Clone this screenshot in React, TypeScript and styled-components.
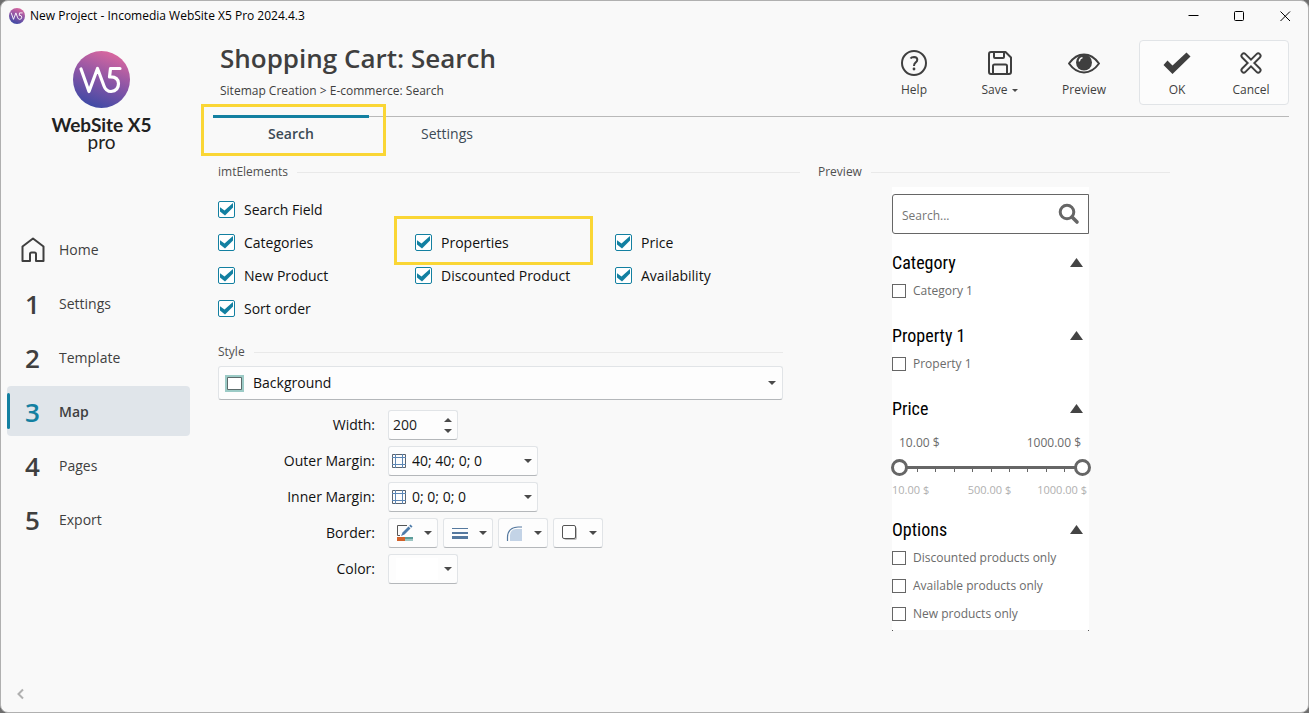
import React, { useState } from "react";
import styled, { createGlobalStyle, css } from "styled-components";

const teal = "#1380a1";
const ink = "#3f3f3f";
const yellow = "#fad635";

const GlobalStyle = createGlobalStyle`
  *, *::before, *::after { box-sizing: border-box; }
  body {
    margin: 0;
    background: #6e6e6e;
    color: #1c1c1c;
    font-family: "Open Sans", "Noto Sans", sans-serif;
    font-size: 14px;
    line-height: 20px;
  }
  button, input, select { font: inherit; color: inherit; margin: 0; }
  button { background: none; border: 0; padding: 0; cursor: pointer; }
  h1, h2, h3, p { margin: 0; font-weight: 400; }
  svg { display: block; flex: none; }
`;

const Window = styled.div`
  display: flex;
  flex-direction: column;
  min-height: 100vh;
  background: #f9f9f9;
  border: 1px solid #b0b0b0;
  border-radius: 8px;
`;

/* ---------- title bar ---------- */

const TitleBar = styled.header`
  display: flex;
  align-items: center;
  height: 30px;
  padding-left: 8px;
  gap: 5px;
  color: #000;
  font-size: 12px;
`;

const WindowButtons = styled.div`
  display: flex;
  margin-left: auto;
`;

const WindowButton = styled.button`
  display: grid;
  place-items: center;
  width: 46px;
  height: 28px;
`;

/* ---------- sidebar ---------- */

const Body = styled.div`
  display: flex;
  flex: 1;
`;

const Sidebar = styled.aside`
  display: flex;
  flex-direction: column;
  width: 189px;
  flex: none;
  padding: 20px 0 12px 6px;
`;

const Brand = styled.div`
  display: flex;
  flex-direction: column;
  align-items: center;
  height: 173px;
  padding-left: 6px;
  color: #222;
  font-family: Lato, sans-serif;
  font-size: 19px;
  line-height: 17px;
`;

const BrandName = styled.span`
  margin-top: 8px;
  font-weight: 700;
  white-space: nowrap;
`;

const BrandEdition = styled.span`
  font-weight: 400;
`;

const Nav = styled.nav`
  display: flex;
  flex-direction: column;
  gap: 4px;
`;

const NavItem = styled.a<{ $active?: boolean }>`
  position: relative;
  display: flex;
  align-items: center;
  height: 50px;
  padding: 2px 0 0 13px;
  border-radius: 4px;
  color: ${ink};
  text-decoration: none;
  ${(p) =>
    p.$active &&
    css`
      background: #e0e5ea;
      font-weight: 600;
      &::before {
        content: "";
        position: absolute;
        left: 0;
        top: 7px;
        bottom: 7px;
        width: 3px;
        border-radius: 2px;
        background: ${teal};
      }
    `}
`;

const NavMark = styled.span<{ $active?: boolean }>`
  display: grid;
  justify-items: center;
  width: 25px;
  margin-right: 14px;
  color: ${(p) => (p.$active ? teal : ink)};
  font-size: 26px;
  font-weight: 600;
`;

const Collapse = styled.button`
  align-self: flex-start;
  margin-top: auto;
  padding-left: 10px;
`;

/* ---------- page header ---------- */

const Main = styled.main`
  flex: 1;
  min-width: 0;
  padding: 9px 19px 20px 23px;
`;

const PageHeader = styled.div`
  display: flex;
  justify-content: space-between;
  height: 76px;
  padding-left: 7px;
`;

const Title = styled.h1`
  margin-top: 2px;
  color: ${ink};
  font-size: 26px;
  font-weight: 600;
  line-height: 32px;
`;

const Breadcrumb = styled.p`
  margin-top: 8px;
  color: ${ink};
  font-size: 12px;
  line-height: 18px;
`;

const Toolbar = styled.div`
  display: flex;
  align-items: flex-start;
`;

const Tool = styled.button<{ $width: number }>`
  display: flex;
  flex-direction: column;
  align-items: center;
  width: ${(p) => p.$width}px;
  padding-top: 9px;
  gap: 4px;
  color: ${ink};
  font-size: 12px;
  line-height: 18px;
`;

const ToolLabel = styled.span`
  display: flex;
  align-items: center;
  gap: 5px;
`;

const Confirm = styled.div`
  display: flex;
  height: 65px;
  margin-left: 14px;
  border: 1px solid #e1e4e7;
  border-radius: 4px;
  background: #fcfcfc;
  & > button { padding-top: 8px; }
`;

/* ---------- tabs ---------- */

const Tabs = styled.div`
  display: flex;
  border-top: 1px solid #b9b9b9;
`;

const Tab = styled.button<{ $active?: boolean }>`
  position: relative;
  width: 156px;
  height: 36px;
  padding-bottom: 2px;
  color: #3c4a55;
  font-weight: ${(p) => (p.$active ? 600 : 400)};
  ${(p) =>
    p.$active &&
    css`
      &::before {
        content: "";
        position: absolute;
        inset: -2px 0 auto;
        height: 3px;
        background: ${teal};
      }
    `}
`;

const Highlight = styled.span<{ $inset: string }>`
  position: absolute;
  inset: ${(p) => p.$inset};
  border: 3px solid ${yellow};
  pointer-events: none;
`;

/* ---------- content ---------- */

const Content = styled.div`
  display: grid;
  grid-template-columns: minmax(0, 1fr) 352px;
  column-gap: 18px;
  padding: 10px 119px 0 5px;
`;

const GroupTitle = styled.h2`
  display: flex;
  align-items: center;
  gap: 9px;
  color: #505050;
  font-size: 12px;
  line-height: 18px;
  &::after {
    content: "";
    flex: 1;
    height: 1px;
    background: #e9e9e9;
  }
`;

const CheckGrid = styled.div`
  display: grid;
  grid-template-columns: 197px 200px 1fr;
  grid-auto-rows: 33px;
  margin: 12px 0 18px;
`;

const CheckLabel = styled.label<{ $first?: boolean }>`
  position: relative;
  grid-column-start: ${(p) => (p.$first ? 1 : "auto")};
  display: flex;
  align-items: center;
  gap: 9px;
  color: #111;
`;

const CheckBoxFrame = styled.span`
  display: grid;
  place-items: center;
  & > * { grid-area: 1 / 1; }
  & > svg { pointer-events: none; visibility: hidden; }
  & > input:checked + svg { visibility: visible; }
`;

const CheckInput = styled.input`
  appearance: none;
  width: 17px;
  height: 17px;
  border: 1px solid ${teal};
  border-radius: 2px;
  background: #fff;
`;

const StyleGroup = styled.section`
  padding-right: 17px;
`;

const fieldBox = css`
  display: flex;
  align-items: center;
  border: 1px solid #e1e4e7;
  border-bottom-color: #b4b7ba;
  border-radius: 3px;
  background: #fdfdfd;
`;

const StyleSelect = styled.div`
  ${fieldBox}
  height: 34px;
  margin: 5px 0 10px;
  padding: 0 6px;
  gap: 9px;
`;

const BareSelect = styled.select`
  flex: 1;
  min-width: 0;
  appearance: none;
  border: 0;
  padding: 0;
  background: none;
  color: #111;
`;

const FormRow = styled.div`
  display: flex;
  align-items: center;
  gap: 13px;
  height: 30px;
  margin-bottom: 6px;
`;

const FormLabel = styled.label`
  width: 157px;
  color: #111;
  text-align: right;
`;

const FieldBox = styled.div<{ $width: number }>`
  ${fieldBox}
  width: ${(p) => p.$width}px;
  height: 30px;
  padding: 0 5px 0 3px;
  gap: 6px;
`;

const NumberInput = styled.input`
  flex: 1;
  min-width: 0;
  border: 0;
  padding: 0 0 0 1px;
  background: none;
  appearance: textfield;
  &::-webkit-inner-spin-button { appearance: none; }
`;

const Spinner = styled.span`
  display: flex;
  flex-direction: column;
  gap: 7px;
`;

const ButtonSet = styled.div`
  display: flex;
  gap: 5px;
`;

const DropButton = styled.button<{ $width: number }>`
  ${fieldBox}
  justify-content: space-between;
  width: ${(p) => p.$width}px;
  height: 30px;
  padding: 0 5px 0 7px;
`;

const Swatch = styled.span`
  width: 42px;
  height: 22px;
  background: #fff;
`;

/* ---------- preview ---------- */

const PreviewPanel = styled.div`
  position: relative;
  width: 197px;
  margin: 6px 0 0 74px;
  padding: 7px 0 2px;
  background: #fff;
  color: #6b6b6b;
  font-size: 12px;
  &::before, &::after {
    content: "";
    position: absolute;
    bottom: -1px;
    left: 0;
    width: 1px;
    height: 1px;
    background: #555;
  }
  &::after { left: auto; right: 0; }
`;

const SearchBox = styled.div`
  display: flex;
  align-items: center;
  height: 40px;
  margin-bottom: 14px;
  padding: 0 8px 0 9px;
  border: 1px solid #666;
  border-radius: 3px 0 0 3px;
`;

const SearchInput = styled.input`
  flex: 1;
  min-width: 0;
  border: 0;
  padding: 4px 0 0;
  background: none;
  &::placeholder { color: #757575; opacity: 1; }
`;

const Facet = styled.section`
  margin-bottom: 16px;
  &:last-child { margin-bottom: 0; }
`;

const FacetTitle = styled.h3`
  color: #000;
  font-family: "Roboto Condensed", "Liberation Sans Narrow", sans-serif;
  font-size: 18px;
  line-height: 29px;
`;

const FacetToggle = styled.button`
  display: flex;
  align-items: center;
  justify-content: space-between;
  width: 100%;
  padding-right: 6px;
`;

const FacetOption = styled.label`
  display: flex;
  align-items: center;
  gap: 7px;
  height: 28px;
`;

const FacetCheck = styled.input`
  appearance: none;
  width: 14px;
  height: 14px;
  border: 1px solid #666;
  background: #fff;
  &:checked { background: #666; }
`;

const PriceValues = styled.div`
  display: flex;
  justify-content: space-between;
  padding: 10px 8px 5px 7px;
  line-height: 20px;
`;

const PriceSlider = styled.div`
  position: relative;
  height: 18px;
  margin: 0 -2px 0 -1px;
`;

const Rail = styled.div`
  position: absolute;
  inset: 8px 10px auto;
  height: 3px;
  background: #666;
`;

const Ticks = styled.div`
  position: absolute;
  inset: 11px 26px auto;
  display: flex;
  justify-content: space-between;
  & > i { width: 1px; height: 3px; background: #666; }
`;

const Range = styled.input`
  position: absolute;
  inset: 0;
  width: 100%;
  height: 18px;
  appearance: none;
  background: none;
  pointer-events: none;
  &::-webkit-slider-thumb {
    appearance: none;
    width: 17px;
    height: 17px;
    border: 3px solid #666;
    border-radius: 50%;
    background: #fff;
    pointer-events: auto;
  }
`;

const PriceScale = styled.div`
  display: grid;
  grid-template-columns: 1fr auto 1fr;
  padding: 4px 2px 0 0;
  color: #b0b0b0;
  font-size: 11px;
  line-height: 19px;
  & > :last-child { text-align: right; }
`;

/* ---------- drawings ---------- */

const LogoMark = ({ size, id }: { size: number; id: string }) => (
  <svg width={size} height={size} viewBox="0 0 57 57" aria-hidden="true">
    <defs>
      <linearGradient id={id} x1="0.75" y1="0.05" x2="0.4" y2="1">
        <stop offset="0" stopColor="#d9679f" />
        <stop offset="0.5" stopColor="#8a55a6" />
        <stop offset="1" stopColor="#3f4aa5" />
      </linearGradient>
    </defs>
    <circle cx="28.5" cy="28.5" r="28.5" fill={`url(#${id})`} />
    <path
      d="M8 18 L16 40.500 L24.500 17.500 L31 35 Q33 40.500 38 40.500 Q45.500 40 45.500 32.500 Q45 25.500 36.500 26 L37.500 17.500 H47"
      fill="none"
      stroke="#fff"
      strokeWidth="3.200"
      strokeLinecap="round"
      strokeLinejoin="round"
    />
  </svg>
);

const Caret = ({ up = false, size = 8 }: { up?: boolean; size?: number }) => (
  <svg width={size} height={size / 2} viewBox="0 0 8 4" aria-hidden="true">
    <path d={up ? "M0 4 L4 0 L8 4 Z" : "M0 0 H8 L4 4 Z"} fill="#4a4a4a" />
  </svg>
);

const HomeIcon = () => (
  <svg width="24" height="26" viewBox="0 0 24 26" fill="none" stroke={ink} strokeWidth="2" strokeLinejoin="round" aria-hidden="true">
    <path d="M1.500 9.500 L12 1.500 L22.500 9.500 V24 H15 V17 Q15 15.500 13.500 15.500 H10.500 Q9 15.500 9 17 V24 H1.500 Z" />
  </svg>
);

const HelpIcon = () => (
  <svg width="28" height="28" viewBox="0 0 28 28" fill="none" stroke={ink} strokeWidth="2" aria-hidden="true">
    <circle cx="14" cy="14" r="12" />
    <path d="M10.500 9.500 Q11.500 8 14 8 Q17.300 8.200 17.300 10.800 Q17.300 12.300 15.500 13.600 Q14 14.700 14 17" />
    <circle cx="14" cy="20" r="1.400" fill={ink} stroke="none" />
  </svg>
);

const SaveIcon = () => (
  <svg width="28" height="28" viewBox="0 0 28 28" fill="none" stroke={ink} strokeWidth="2" strokeLinejoin="round" aria-hidden="true">
    <path d="M5 3 H19.500 L25 8.500 V23 Q25 25 23 25 H5 Q3 25 3 23 V5 Q3 3 5 3 Z" />
    <path d="M8 3 V8 Q8 9 9 9 H17 Q18 9 18 8 V3 M7 25 V17 Q7 15.500 8.500 15.500 H19.500 Q21 15.500 21 17 V25" />
  </svg>
);

const EyeIcon = () => (
  <svg width="34" height="28" viewBox="0 0 34 28" aria-hidden="true">
    <path d="M2 14.500 Q8.500 5.500 17 5.500 Q25.500 5.500 32 14.500 Q25.500 23.500 17 23.500 Q8.500 23.500 2 14.500 Z" fill="none" stroke={ink} strokeWidth="2" strokeLinejoin="round" />
    <circle cx="17" cy="13.500" r="8" fill={ink} />
    <path d="M12.300 12.500 Q12.500 9.300 15.500 8.600" fill="none" stroke="#fff" strokeWidth="1.400" />
  </svg>
);

const OkIcon = () => (
  <svg width="28" height="28" viewBox="0 0 28 28" aria-hidden="true">
    <path d="M0.500 16 L4.500 11.500 L9.500 16.500 L23.500 3.500 L27.500 7.500 L9.500 25 Z" fill={ink} />
  </svg>
);

const CancelIcon = () => (
  <svg width="28" height="28" viewBox="0 0 28 28" fill="none" strokeLinecap="round" aria-hidden="true">
    <path d="M6.800 6.800 L21.200 21.200 M21.200 6.800 L6.800 21.200" stroke={ink} strokeWidth="6.600" />
    <path d="M6.800 6.800 L21.200 21.200 M21.200 6.800 L6.800 21.200" stroke="#fcfcfc" strokeWidth="2.800" />
  </svg>
);

const CheckIcon = () => (
  <svg width="17" height="17" viewBox="0 0 17 17" aria-hidden="true">
    <path d="M2 6.300 L6.500 9.600 L15 2 V6.500 L7 14.600 L2 10.600 Z" fill={teal} />
  </svg>
);

const BackgroundIcon = () => (
  <svg width="19" height="17" viewBox="0 0 19 17" aria-hidden="true">
    <path d="M0 0 H19 V17 H0 Z" fill="#9ccbc6" />
    <path d="M2.500 2.500 H16.500 V14.500 H2.500 Z" fill="#fff" stroke="#5c6b6b" />
  </svg>
);

const MarginIcon = () => (
  <svg width="14" height="14" viewBox="0 0 14 14" fill="none" aria-hidden="true">
    <path d="M0.500 0.500 H13.500 V13.500 H0.500 Z" stroke="#5a6470" />
    <path d="M3.500 0 V14 M10.500 0 V14 M0 3.500 H14 M0 10.500 H14" stroke="#5c86b4" />
  </svg>
);

const BorderColorIcon = () => (
  <svg width="18" height="18" viewBox="0 0 18 18" aria-hidden="true">
    <path d="M11 1.500 H1.500 V11.500 H4" fill="none" stroke="#555" />
    <path d="M5 12 L6.500 8.500 L12.500 2.500 L14.500 4.500 L8.500 10.500 Z" fill="#4d7ba9" />
    <path d="M13.200 1.800 L14.500 0.500 L16.500 2.500 L15.200 3.800 Z" fill="#4d7ba9" />
    <path d="M1 13 H9 V17 H1 Z" fill="#d2622a" />
    <path d="M9 13 H17 V15 H9 Z" fill="#5b9c99" />
    <path d="M9 15 H17 V17 H9 Z" fill="#9cc6c3" />
  </svg>
);

const BorderWidthIcon = () => (
  <svg width="18" height="18" viewBox="0 0 18 18" fill="#55799f" aria-hidden="true">
    <path d="M1 4 H17 V5 H1 Z M1 8 H17 V10 H1 Z M1 12 H17 V15 H1 Z" />
  </svg>
);

const BorderRadiusIcon = () => (
  <svg width="18" height="18" viewBox="0 0 18 18" aria-hidden="true">
    <path d="M4 17 V11 Q4.500 5.500 10 5 H16 V17 Z" fill="#c3d3e6" />
    <path d="M1.500 17 V13 Q2 3.500 12 3 H16" fill="none" stroke="#55799f" strokeWidth="1.200" />
  </svg>
);

const ShadowIcon = () => (
  <svg width="18" height="18" viewBox="0 0 18 18" aria-hidden="true">
    <rect x="3" y="3" width="13" height="13" rx="2" fill="#bdbdbd" />
    <rect x="1.500" y="1.500" width="13" height="13" rx="1.500" fill="#fff" stroke="#555" />
  </svg>
);

const MagnifierIcon = () => (
  <svg width="22" height="22" viewBox="0 0 22 22" fill="none" stroke="#666" strokeWidth="3" strokeLinecap="round" aria-hidden="true">
    <circle cx="9" cy="9" r="6.800" />
    <path d="M14 14 L19 19" strokeWidth="3.600" />
  </svg>
);

const FacetArrow = () => (
  <svg width="13" height="9" viewBox="0 0 13 9" aria-hidden="true">
    <path d="M6.500 0 L13 9 H0 Z" fill="#444" />
  </svg>
);

/* ---------- parts ---------- */

const Option = ({ label, first, marked }: { label: string; first?: boolean; marked?: boolean }) => (
  <CheckLabel $first={first}>
    <CheckBoxFrame>
      <CheckInput type="checkbox" defaultChecked />
      <CheckIcon />
    </CheckBoxFrame>
    {label}
    {marked && <Highlight $inset="-10px 22px -6px -21px" />}
  </CheckLabel>
);

const MarginField = ({ id, label, value }: { id: string; label: string; value: string }) => (
  <FormRow>
    <FormLabel htmlFor={id}>{label}</FormLabel>
    <FieldBox $width={150}>
      <MarginIcon />
      <BareSelect id={id}>
        <option>{value}</option>
      </BareSelect>
      <Caret />
    </FieldBox>
  </FormRow>
);

const FacetGroup = ({ title, children }: { title: string; children: React.ReactNode }) => (
  <Facet>
    <FacetTitle>
      <FacetToggle type="button">
        {title}
        <FacetArrow />
      </FacetToggle>
    </FacetTitle>
    {children}
  </Facet>
);

const FacetChoice = ({ label }: { label: string }) => (
  <FacetOption>
    <FacetCheck type="checkbox" />
    {label}
  </FacetOption>
);

const steps = [
  { mark: <HomeIcon />, label: "Home" },
  { mark: "1", label: "Settings" },
  { mark: "2", label: "Template" },
  { mark: "3", label: "Map", active: true },
  { mark: "4", label: "Pages" },
  { mark: "5", label: "Export" },
];

const borderTools = [
  { label: "Border color", icon: <BorderColorIcon /> },
  { label: "Border thickness", icon: <BorderWidthIcon /> },
  { label: "Border corners", icon: <BorderRadiusIcon /> },
  { label: "Border shadow", icon: <ShadowIcon /> },
];

export default function App() {
  const [width, setWidth] = useState(200);

  return (
    <>
      <GlobalStyle />
      <Window>
        <TitleBar>
          <LogoMark size={16} id="logo-small" />
          New Project - Incomedia WebSite X5 Pro 2024.4.3
          <WindowButtons>
            <WindowButton type="button" aria-label="Minimize">
              <svg width="11" height="11" viewBox="0 0 11 11"><path d="M0.500 4.500 H10.500" stroke="#000" /></svg>
            </WindowButton>
            <WindowButton type="button" aria-label="Maximize">
              <svg width="11" height="11" viewBox="0 0 11 11"><rect x="0.500" y="0.500" width="9" height="9" rx="1" fill="none" stroke="#000" /></svg>
            </WindowButton>
            <WindowButton type="button" aria-label="Close">
              <svg width="11" height="11" viewBox="0 0 11 11"><path d="M0.500 0.500 L10 10 M10 0.500 L0.500 10" stroke="#000" /></svg>
            </WindowButton>
          </WindowButtons>
        </TitleBar>

        <Body>
          <Sidebar>
            <Brand>
              <LogoMark size={57} id="logo-large" />
              <BrandName>WebSite X5</BrandName>
              <BrandEdition>pro</BrandEdition>
            </Brand>
            <Nav>
              {steps.map((s) => (
                <NavItem key={s.label} href="#" $active={s.active}>
                  <NavMark $active={s.active}>{s.mark}</NavMark>
                  {s.label}
                </NavItem>
              ))}
            </Nav>
            <Collapse type="button" aria-label="Collapse">
              <svg width="7" height="12" viewBox="0 0 7 12"><path d="M6 1.500 L1.500 6 L6 10.500" fill="none" stroke="#b0b0b0" strokeWidth="2" /></svg>
            </Collapse>
          </Sidebar>

          <Main>
            <PageHeader>
              <div>
                <Title>Shopping Cart: Search</Title>
                <Breadcrumb>Sitemap Creation &gt; E-commerce: Search</Breadcrumb>
              </div>
              <Toolbar>
                <Tool type="button" $width={86}>
                  <HelpIcon />
                  <ToolLabel>Help</ToolLabel>
                </Tool>
                <Tool type="button" $width={86}>
                  <SaveIcon />
                  <ToolLabel>Save <Caret size={6} /></ToolLabel>
                </Tool>
                <Tool type="button" $width={82}>
                  <EyeIcon />
                  <ToolLabel>Preview</ToolLabel>
                </Tool>
                <Confirm>
                  <Tool type="button" $width={74}>
                    <OkIcon />
                    <ToolLabel>OK</ToolLabel>
                  </Tool>
                  <Tool type="button" $width={74}>
                    <CancelIcon />
                    <ToolLabel>Cancel</ToolLabel>
                  </Tool>
                </Confirm>
              </Toolbar>
            </PageHeader>

            <Tabs role="tablist">
              <Tab type="button" role="tab" aria-selected="true" $active>
                Search
                <Highlight $inset="-13px -17px -3px -12px" />
              </Tab>
              <Tab type="button" role="tab" aria-selected="false">Settings</Tab>
            </Tabs>

            <Content>
              <div>
                <section>
                  <GroupTitle>imtElements</GroupTitle>
                  <CheckGrid>
                    <Option label="Search Field" first />
                    <Option label="Categories" first />
                    <Option label="Properties" marked />
                    <Option label="Price" />
                    <Option label="New Product" first />
                    <Option label="Discounted Product" />
                    <Option label="Availability" />
                    <Option label="Sort order" first />
                  </CheckGrid>
                </section>

                <StyleGroup>
                  <GroupTitle>Style</GroupTitle>
                  <StyleSelect>
                    <BackgroundIcon />
                    <BareSelect aria-label="Style">
                      <option>Background</option>
                    </BareSelect>
                    <Caret />
                  </StyleSelect>

                  <FormRow>
                    <FormLabel htmlFor="width">Width:</FormLabel>
                    <FieldBox $width={70}>
                      <NumberInput
                        id="width"
                        type="number"
                        value={width}
                        onChange={(e) => setWidth(Number(e.target.value))}
                      />
                      <Spinner>
                        <button type="button" aria-label="Increase width" onClick={() => setWidth(width + 1)}><Caret up /></button>
                        <button type="button" aria-label="Decrease width" onClick={() => setWidth(width - 1)}><Caret /></button>
                      </Spinner>
                    </FieldBox>
                  </FormRow>
                  <MarginField id="outer-margin" label="Outer Margin:" value="40; 40; 0; 0" />
                  <MarginField id="inner-margin" label="Inner Margin:" value="0; 0; 0; 0" />
                  <FormRow>
                    <FormLabel as="span">Border:</FormLabel>
                    <ButtonSet>
                      {borderTools.map((t) => (
                        <DropButton key={t.label} type="button" aria-label={t.label} $width={50}>
                          {t.icon}
                          <Caret />
                        </DropButton>
                      ))}
                    </ButtonSet>
                  </FormRow>
                  <FormRow>
                    <FormLabel htmlFor="color">Color:</FormLabel>
                    <DropButton id="color" type="button" $width={70}>
                      <Swatch />
                      <Caret />
                    </DropButton>
                  </FormRow>
                </StyleGroup>
              </div>

              <section>
                <GroupTitle>Preview</GroupTitle>
                <PreviewPanel>
                  <SearchBox>
                    <SearchInput type="text" placeholder="Search..." aria-label="Search" />
                    <MagnifierIcon />
                  </SearchBox>
                  <FacetGroup title="Category">
                    <FacetChoice label="Category 1" />
                  </FacetGroup>
                  <FacetGroup title="Property 1">
                    <FacetChoice label="Property 1" />
                  </FacetGroup>
                  <FacetGroup title="Price">
                    <PriceValues>
                      <span>10.00 $</span>
                      <span>1000.00 $</span>
                    </PriceValues>
                    <PriceSlider>
                      <Rail />
                      <Ticks>
                        {Array.from({ length: 9 }, (_, i) => <i key={i} />)}
                      </Ticks>
                      <Range type="range" min={10} max={1000} defaultValue={10} aria-label="Minimum price" />
                      <Range type="range" min={10} max={1000} defaultValue={1000} aria-label="Maximum price" />
                    </PriceSlider>
                    <PriceScale>
                      <span>10.00 $</span>
                      <span>500.00 $</span>
                      <span>1000.00 $</span>
                    </PriceScale>
                  </FacetGroup>
                  <FacetGroup title="Options">
                    <FacetChoice label="Discounted products only" />
                    <FacetChoice label="Available products only" />
                    <FacetChoice label="New products only" />
                  </FacetGroup>
                </PreviewPanel>
              </section>
            </Content>
          </Main>
        </Body>
      </Window>
    </>
  );
}
